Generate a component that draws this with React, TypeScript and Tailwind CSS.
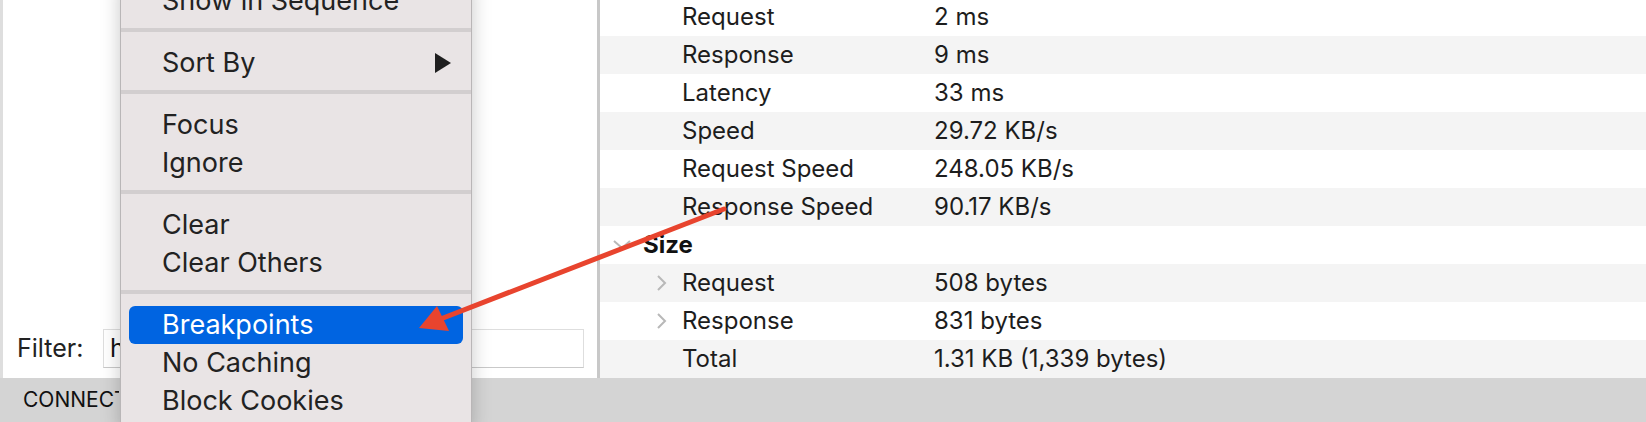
import React from 'react';

type Row = {
  label: string;
  value?: string;
  kind?: 'header' | 'expand';
};

const rows: Row[] = [
  { label: 'Request', value: '2 ms' },
  { label: 'Response', value: '9 ms' },
  { label: 'Latency', value: '33 ms' },
  { label: 'Speed', value: '29.72 KB/s' },
  { label: 'Request Speed', value: '248.05 KB/s' },
  { label: 'Response Speed', value: '90.17 KB/s' },
  { label: 'Size', kind: 'header' },
  { label: 'Request', value: '508 bytes', kind: 'expand' },
  { label: 'Response', value: '831 bytes', kind: 'expand' },
  { label: 'Total', value: '1.31 KB (1,339 bytes)' },
];

// null = separator
const menuItems: (string | null)[] = [
  'Show in Sequence',
  null,
  'Sort By',
  null,
  'Focus',
  'Ignore',
  null,
  'Clear',
  'Clear Others',
  null,
  'Breakpoints',
  'No Caching',
  'Block Cookies',
];

const DetailRow = ({ row, index }: { row: Row; index: number }) => {
  const bg = index % 2 === 1 ? 'bg-[#f4f4f4]' : 'bg-white';

  if (row.kind === 'header') {
    return (
      <div className={`flex h-[38px] items-center ${bg}`}>
        <svg width="18" height="10" viewBox="0 0 18 10" className="ml-[13px]">
          <polyline points="1,1 9,8 17,1" fill="none" stroke="#b8b8b8" strokeWidth="2" />
        </svg>
        <span className="ml-[12px] text-[24px] font-bold text-[#111]">{row.label}</span>
      </div>
    );
  }

  return (
    <div className={`flex h-[38px] items-center ${bg}`}>
      <div className="flex w-[82px] shrink-0 justify-start">
        {row.kind === 'expand' && (
          <svg width="12" height="16" viewBox="0 0 12 16" className="ml-[56px]">
            <polyline points="2,1 9,8 2,15" fill="none" stroke="#b8b8b8" strokeWidth="2" />
          </svg>
        )}
      </div>
      <span className="w-[252px] shrink-0 text-[24px] text-[#1d1d1d]">{row.label}</span>
      <span className="text-[24px] text-[#1d1d1d]">{row.value}</span>
    </div>
  );
};

const ContextMenu = () => {
  return (
    <div className="absolute left-[120px] top-[-18px] w-[352px] border-x border-[#b9b6b7] bg-[#e9e4e5] pb-[12px] shadow-[0_0_18px_rgba(0,0,0,0.22)]">
      {menuItems.map((item, i) => {
        if (item === null) {
          return <div key={i} className="mb-[12px] mt-[8px] h-[4px] bg-[#d2cecf]" />;
        }
        const active = item === 'Breakpoints';
        return (
          <div
            key={i}
            className={`mx-[8px] flex h-[38px] items-center rounded-[6px] pl-[33px] pr-[12px] text-[27px] ${
              active ? 'bg-[#0064e1] text-white' : 'text-[#222]'
            }`}
          >
            <span className="flex-1">{item}</span>
            {item === 'Sort By' && (
              <svg width="16" height="20" viewBox="0 0 16 20">
                <polygon points="0,0 16,10 0,20" fill="#1f1f1f" />
              </svg>
            )}
          </div>
        );
      })}
    </div>
  );
};

export default function App() {
  return (
    <div className="relative h-[422px] w-[1646px] overflow-hidden bg-white font-[family-name:Inter,sans-serif]">
      <div className="flex h-[378px]">
        <div className="w-[3px] bg-[#dedede]" />
        <div className="flex w-[594px] flex-col justify-end bg-white pb-[10px] pl-[14px] pr-[13px]">
          <div className="flex items-center">
            <span className="w-[86px] text-[25px] text-[#222]">Filter:</span>
            <div className="flex h-[39px] flex-1 items-center border border-[#dedede] border-b-[#c9c9c9] bg-white pl-[6px] text-[25px] text-[#111]">
              h
            </div>
          </div>
        </div>
        <div className="w-[3px] bg-[#c8c8c8]" />
        <div className="flex-1 overflow-hidden">
          <div className="-mt-[2px] flex flex-col">
            {rows.map((row, i) => (
              <DetailRow key={i} row={row} index={i} />
            ))}
          </div>
        </div>
      </div>
      <div className="flex h-[44px] items-center bg-[#d4d4d4] pl-[23px] text-[21px] text-[#111]">
        <span className="w-[96px] overflow-hidden whitespace-nowrap">CONNECTIONS</span>
      </div>

      <ContextMenu />

      <svg className="pointer-events-none absolute left-0 top-0" width="1646" height="422">
        <line x1="724" y1="209" x2="438" y2="320" stroke="#e8442e" strokeWidth="5" strokeLinecap="round" />
        <polygon points="419,328 437,306 449,331" fill="#e8442e" />
      </svg>
    </div>
  );
}
